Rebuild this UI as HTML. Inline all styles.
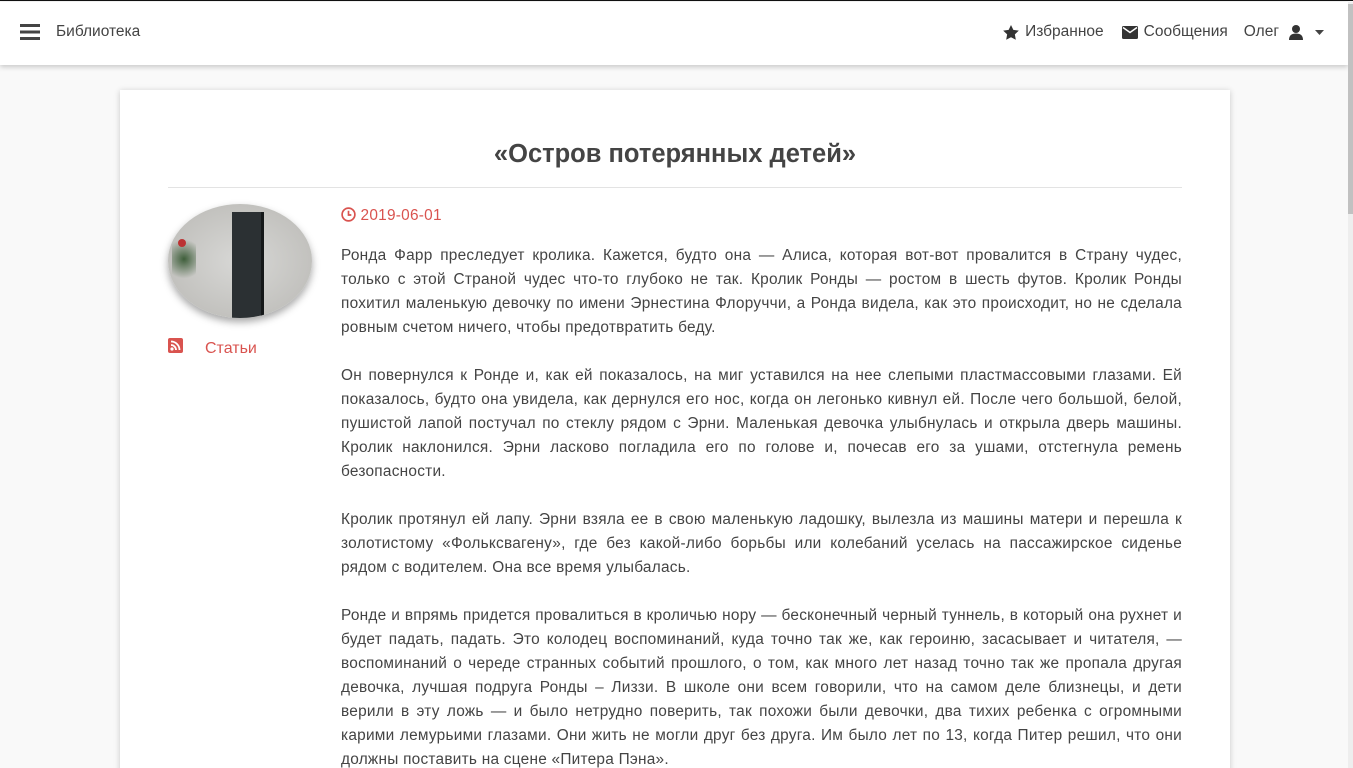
<!DOCTYPE html>
<html><head><meta charset="utf-8"><style>
*{box-sizing:border-box}
html{height:768px;overflow:hidden}
body{margin:0;width:1353px;height:768px;overflow:hidden;background:#f9f9f9;font-family:"Liberation Sans",sans-serif;color:#444;border-top:1px solid #111;position:relative}
.nav{position:absolute;top:1px;left:0;width:1348px;height:63px;background:#fff;box-shadow:0 2px 5px rgba(0,0,0,.2);font-size:15.5px;color:#444}
.nav .l{position:absolute;left:20px;top:21px;display:flex;align-items:center}
.nav .r{position:absolute;right:24px;top:21px;display:flex;align-items:center;gap:6px}
.sb{position:absolute;right:0;top:1px;width:5px;height:767px;background:#eee}
.sb div{background:#c1c1c1;height:210px;margin-top:2px}
.card{position:absolute;left:120px;top:89px;width:1110px;height:700px;background:#fff;box-shadow:0 1px 6px rgba(0,0,0,.2)}
h1{position:absolute;left:48px;width:1014px;top:50px;margin:0;text-align:center;font-size:25.5px;font-weight:bold;color:#444}
.hr{position:absolute;left:48px;width:1014px;top:97px;border-top:1px solid #e3e3e3}
.img{position:absolute;left:48px;top:114px;width:144px;height:114px;border-radius:50%;background:radial-gradient(ellipse at 50% 50%,#d8d8d6,#b9b8b4);box-shadow:0 4px 8px rgba(0,0,0,.35);overflow:hidden}
.book{position:absolute;left:64px;top:8px;width:32px;height:108px;background:#2b3033;border-right:3px solid #151819}
.tag{position:absolute;left:48px;top:248px;color:#d9534f;font-size:16px}
.txt{position:absolute;left:221px;top:114px;width:841px;font-size:15.4px;letter-spacing:0.25px;line-height:24px;text-align:justify;color:#444}
.txt p{margin:0 0 24px}
.date{color:#d9534f;margin-bottom:16px}
</style></head><body>
<div class="nav">
<div class="l"><svg width="20" height="18"><rect y="1" width="20" height="3" fill="#444"/><rect y="7.5" width="20" height="3" fill="#444"/><rect y="14" width="20" height="3" fill="#444"/></svg><span style="margin-left:16px">Библиотека</span></div>
<div class="r"><svg width="16" height="15" viewBox="0 0 24 23"><path d="M12 0l3.6 7.5 8.4 1.1-6.1 5.8 1.5 8.3L12 18.8 4.6 22.7l1.5-8.3L0 8.6l8.4-1.1z" fill="#333"/></svg><span>Избранное</span><svg style="margin-left:12px" width="16" height="13" viewBox="0 0 16 13"><rect width="16" height="13" rx="1.5" fill="#333"/><path d="M1 1.5l7 5 7-5" stroke="#fff" stroke-width="1.5" fill="none"/></svg><span>Сообщения</span><span style="margin-left:10px">Олег</span><svg style="margin-left:4px" width="14" height="15" viewBox="0 0 14 15"><circle cx="7" cy="4" r="4" fill="#333"/><path d="M0 15c0-5 3-6.5 7-6.5s7 1.5 7 6.5z" fill="#333"/></svg><svg style="margin-left:6px" width="9" height="5"><path d="M0 0h9L4.5 5z" fill="#444"/></svg></div>
</div>
<div class="sb"><div></div></div>
<div class="card">
<h1>«Остров потерянных детей»</h1>
<div class="hr"></div>
<div class="img"><div class="book"></div><div style="position:absolute;left:4px;top:30px;width:24px;height:50px;background:radial-gradient(circle,#3e5e3a,transparent 70%)"></div><div style="position:absolute;left:10px;top:35px;width:8px;height:8px;border-radius:50%;background:#b33"></div></div>
<div class="tag"><svg width="15" height="15" viewBox="0 0 15 15"><rect width="15" height="15" rx="2" fill="#d9534f"/><circle cx="4" cy="11" r="1.6" fill="#fff"/><path d="M3 7a5 5 0 015 5M3 3.5a8.5 8.5 0 018.5 8.5" stroke="#fff" stroke-width="1.8" fill="none"/></svg><span style="margin-left:22px">Статьи</span></div>
<div class="txt">
<div class="date"><svg width="15" height="15" viewBox="0 0 16 16" style="vertical-align:-2px"><circle cx="8" cy="8" r="6.8" stroke="#d9534f" stroke-width="1.8" fill="none"/><path d="M8 4v4.5h3" stroke="#d9534f" stroke-width="1.8" fill="none"/></svg> 2019-06-01</div>
<p>Ронда Фарр преследует кролика. Кажется, будто она — Алиса, которая вот-вот провалится в Страну чудес, только с этой Страной чудес что-то глубоко не так. Кролик Ронды — ростом в шесть футов. Кролик Ронды похитил маленькую девочку по имени Эрнестина Флоруччи, а Ронда видела, как это происходит, но не сделала ровным счетом ничего, чтобы предотвратить беду.</p>
<p>Он повернулся к Ронде и, как ей показалось, на миг уставился на нее слепыми пластмассовыми глазами. Ей показалось, будто она увидела, как дернулся его нос, когда он легонько кивнул ей. После чего большой, белой, пушистой лапой постучал по стеклу рядом с Эрни. Маленькая девочка улыбнулась и открыла дверь машины. Кролик наклонился. Эрни ласково погладила его по голове и, почесав его за ушами, отстегнула ремень безопасности.</p>
<p>Кролик протянул ей лапу. Эрни взяла ее в свою маленькую ладошку, вылезла из машины матери и перешла к золотистому «Фольксвагену», где без какой-либо борьбы или колебаний уселась на пассажирское сиденье рядом с водителем. Она все время улыбалась.</p>
<p>Ронде и впрямь придется провалиться в кроличью нору — бесконечный черный туннель, в который она рухнет и будет падать, падать. Это колодец воспоминаний, куда точно так же, как героиню, засасывает и читателя, — воспоминаний о череде странных событий прошлого, о том, как много лет назад точно так же пропала другая девочка, лучшая подруга Ронды – Лиззи. В школе они всем говорили, что на самом деле близнецы, и дети верили в эту ложь — и было нетрудно поверить, так похожи были девочки, два тихих ребенка с огромными карими лемурьими глазами. Они жить не могли друг без друга. Им было лет по 13, когда Питер решил, что они должны поставить на сцене «Питера Пэна».</p>
</div>
</div>
</body></html>
